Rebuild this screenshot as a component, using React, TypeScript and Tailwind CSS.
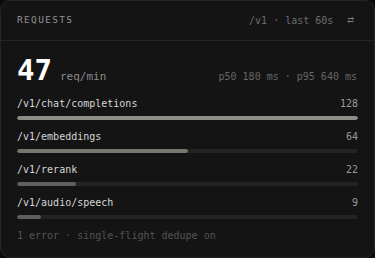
import React from "react";

const rows = [
  { path: "/v1/chat/completions", n: 128, color: "bg-[#8d8d88]" },
  { path: "/v1/embeddings", n: 64, color: "bg-[#76766f]" },
  { path: "/v1/rerank", n: 22, color: "bg-[#5f5f5b]" },
  { path: "/v1/audio/speech", n: 9, color: "bg-[#5f5f5b]" },
];

export default function App() {
  const max = 128;
  return (
    <div
      className="w-[375px] h-[258px] bg-[#0b0b0b]"
      style={{ fontFamily: '"DejaVu Sans Mono", "Liberation Mono", monospace' }}
    >
      <div className="w-full h-full rounded-[10px] border border-[#262626] bg-[#141414] flex flex-col">
        <div className="h-[40px] shrink-0 border-b border-[#242424] flex items-center justify-between pl-[16px] pr-[20px]">
          <span className="text-[9.5px] tracking-[0.14em] text-[#919191]">REQUESTS</span>
          <div className="flex items-center gap-[14px] text-[10px] text-[#6c6c6c]">
            <span>/v1 · last 60s</span>
            <span className="text-[11px] text-[#7a7a7a]">⇄</span>
          </div>
        </div>
        <div className="px-[16px] pt-[14px]">
          <div className="flex items-baseline justify-between pr-[1px]">
            <div className="flex items-baseline gap-[8px]">
              <span className="text-[29px] leading-[30px] font-bold text-white">47</span>
              <span className="text-[11px] text-[#8a8a8a]">req/min</span>
            </div>
            <span className="text-[10px] text-[#666]">p50 180 ms · p95 640 ms</span>
          </div>
          <div className="mt-[11px] flex flex-col gap-[10px]">
            {rows.map((r) => (
              <div key={r.path} className="flex flex-col gap-[5px]">
                <div className="flex justify-between items-center h-[14px] text-[10px]">
                  <span className="text-[#d6d6d6]">{r.path}</span>
                  <span className="text-[#9a9a9a]">{r.n}</span>
                </div>
                <div className="h-[4px] rounded-full bg-[#232323] overflow-hidden">
                  <div className={`h-full rounded-full ${r.color}`} style={{ width: `${(r.n / max) * 100}%` }} />
                </div>
              </div>
            ))}
          </div>
          <div className="mt-[9px] text-[10px] text-[#555]">1 error · single-flight dedupe on</div>
        </div>
      </div>
    </div>
  );
}
